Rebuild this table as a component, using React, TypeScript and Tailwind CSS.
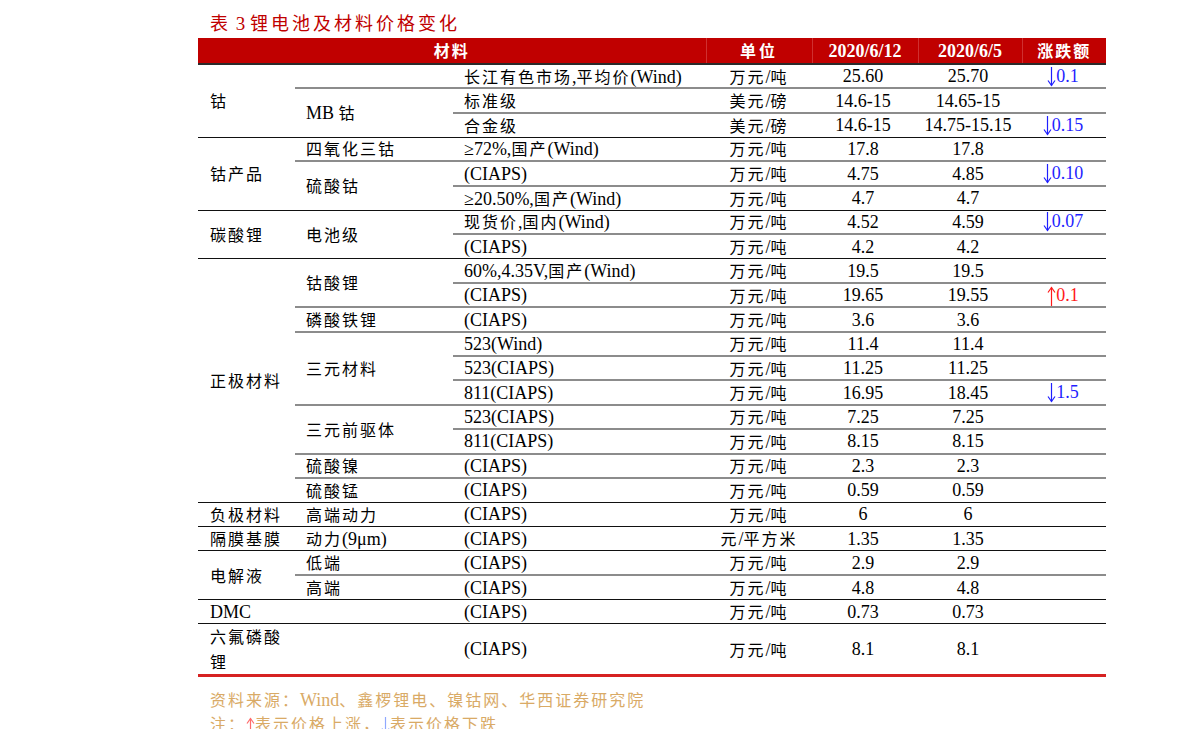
import React from "react";

type Cell = { t: string; span?: number; cols?: number };
type Row = {
  g?: boolean;
  c1?: Cell;
  c2?: Cell;
  c3: string;
  u: string;
  a: string;
  b: string;
  d?: string;
  tall?: boolean;
};

const rows: Row[] = [
  { g: true, c1: { t: "钴", span: 3 }, c2: { t: "" }, c3: "长江有色市场,平均价(Wind)", u: "万元/吨", a: "25.60", b: "25.70", d: "↓0.1" },
  { c2: { t: "MB 钴", span: 2 }, c3: "标准级", u: "美元/磅", a: "14.6-15", b: "14.65-15" },
  { c3: "合金级", u: "美元/磅", a: "14.6-15", b: "14.75-15.15", d: "↓0.15" },
  { g: true, c1: { t: "钴产品", span: 3 }, c2: { t: "四氧化三钴" }, c3: "≥72%,国产(Wind)", u: "万元/吨", a: "17.8", b: "17.8" },
  { c2: { t: "硫酸钴", span: 2 }, c3: "(CIAPS)", u: "万元/吨", a: "4.75", b: "4.85", d: "↓0.10" },
  { c3: "≥20.50%,国产(Wind)", u: "万元/吨", a: "4.7", b: "4.7" },
  { g: true, c1: { t: "碳酸锂", span: 2 }, c2: { t: "电池级", span: 2 }, c3: "现货价,国内(Wind)", u: "万元/吨", a: "4.52", b: "4.59", d: "↓0.07" },
  { c3: "(CIAPS)", u: "万元/吨", a: "4.2", b: "4.2" },
  { g: true, c1: { t: "正极材料", span: 10 }, c2: { t: "钴酸锂", span: 2 }, c3: "60%,4.35V,国产(Wind)", u: "万元/吨", a: "19.5", b: "19.5" },
  { c3: "(CIAPS)", u: "万元/吨", a: "19.65", b: "19.55", d: "↑0.1" },
  { c2: { t: "磷酸铁锂" }, c3: "(CIAPS)", u: "万元/吨", a: "3.6", b: "3.6" },
  { c2: { t: "三元材料", span: 3 }, c3: "523(Wind)", u: "万元/吨", a: "11.4", b: "11.4" },
  { c3: "523(CIAPS)", u: "万元/吨", a: "11.25", b: "11.25" },
  { c3: "811(CIAPS)", u: "万元/吨", a: "16.95", b: "18.45", d: "↓1.5" },
  { c2: { t: "三元前驱体", span: 2 }, c3: "523(CIAPS)", u: "万元/吨", a: "7.25", b: "7.25" },
  { c3: "811(CIAPS)", u: "万元/吨", a: "8.15", b: "8.15" },
  { c2: { t: "硫酸镍" }, c3: "(CIAPS)", u: "万元/吨", a: "2.3", b: "2.3" },
  { c2: { t: "硫酸锰" }, c3: "(CIAPS)", u: "万元/吨", a: "0.59", b: "0.59" },
  { g: true, c1: { t: "负极材料" }, c2: { t: "高端动力" }, c3: "(CIAPS)", u: "万元/吨", a: "6", b: "6" },
  { g: true, c1: { t: "隔膜基膜" }, c2: { t: "动力(9μm)" }, c3: "(CIAPS)", u: "元/平方米", a: "1.35", b: "1.35" },
  { g: true, c1: { t: "电解液", span: 2 }, c2: { t: "低端" }, c3: "(CIAPS)", u: "万元/吨", a: "2.9", b: "2.9" },
  { c2: { t: "高端" }, c3: "(CIAPS)", u: "万元/吨", a: "4.8", b: "4.8" },
  { g: true, c1: { t: "DMC" }, c2: { t: "" }, c3: "(CIAPS)", u: "万元/吨", a: "0.73", b: "0.73" },
  { g: true, c1: { t: "六氟磷酸锂" }, c2: { t: "" }, c3: "(CIAPS)", u: "万元/吨", a: "8.1", b: "8.1", tall: true },
];

const HAN = /[\u3000-\u303f\u3400-\u9fff\uff00-\uffef]/;

// split text so Chinese runs get the spaced look and latin stays Times-like
function Txt({ s, cjk = "text-[16px] tracking-[2px]" }: { s: string; cjk?: string }) {
  const parts = s.split(/([\u3000-\u303f\u3400-\u9fff\uff00-\uffef]+)/);
  return (
    <>
      {parts.map((p, i) =>
        HAN.test(p) ? (
          <span key={i} className={`font-['Noto_Sans_CJK_SC',sans-serif] ${cjk}`}>
            {p}
          </span>
        ) : (
          <span key={i}>{p}</span>
        )
      )}
    </>
  );
}

function Arrow({ up, color, h = 20 }: { up?: boolean; color: string; h?: number }) {
  return (
    <svg width="9" height={h} viewBox={`0 0 9 ${h}`} className="inline-block align-[-5px]" fill="none" stroke={color} strokeWidth="1.2">
      {up ? (
        <>
          <path d={`M4.5 1.5V${h}`} />
          <path d="M1 6.5L4.5 1.5L8 6.5" />
        </>
      ) : (
        <>
          <path d={`M4.5 0V${h - 1.5}`} />
          <path d={`M1 ${h - 6.5}L4.5 ${h - 1.5}L8 ${h - 6.5}`} />
        </>
      )}
    </svg>
  );
}

function Change({ d }: { d?: string }) {
  if (!d) return null;
  const up = d.startsWith("↑");
  const color = up ? "#ff1a1a" : "#1f1fff";
  return (
    <span className={up ? "text-[#ff1a1a]" : "text-[#1f1fff]"}>
      <Arrow up={up} color={color} />
      {d.slice(1)}
    </span>
  );
}

export default function App() {
  return (
    <div className="w-[1191px] h-[729px] overflow-hidden bg-white font-['Liberation_Serif',serif] text-black">
      <div className="ml-[198px] w-[908px]">
        <div className="h-[38px] pt-[9px] pl-[12px] leading-[26px] text-[19px] text-[#c00000]">
          <Txt s="表 3 锂电池及材料价格变化" cjk="text-[18px] tracking-[3px]" />
        </div>

        <table className="w-[908px] table-fixed border-collapse text-[18px]">
          <colgroup>
            <col className="w-[97px]" />
            <col className="w-[158px]" />
            <col className="w-[253px]" />
            <col className="w-[106px]" />
            <col className="w-[106px]" />
            <col className="w-[104px]" />
            <col className="w-[84px]" />
          </colgroup>
          <thead>
            <tr className="h-[26px] bg-[#c00000] text-white">
              <th colSpan={3} className="p-0 font-normal text-center leading-[20px]">
                <Txt s="材料" cjk="text-[16px] tracking-[2px] font-bold" />
              </th>
              <th className="p-0 font-normal text-center leading-[20px] border-l border-[#cf3030]">
                <Txt s="单位" cjk="text-[16px] tracking-[3px] font-bold" />
              </th>
              <th className="p-0 font-bold text-center leading-[20px] border-l border-[#cf3030]">2020/6/12</th>
              <th className="p-0 font-bold text-center leading-[20px] border-l border-[#cf3030]">2020/6/5</th>
              <th className="p-0 font-normal text-center leading-[20px] border-l border-[#cf3030]">
                <Txt s="涨跌额" cjk="text-[16px] tracking-[2px] font-bold" />
              </th>
            </tr>
          </thead>
          <tbody>
            {rows.map((r, i) => {
              const line =
                i === 0
                  ? "border-t-2 border-[#2a2a2a]"
                  : r.g
                  ? "border-t border-[#111]"
                  : "border-t-2 border-[#8c8c8c]";
              const td = `p-0 align-middle leading-[20px] ${line}`;
              return (
                <tr key={i} className={r.tall ? "h-[47.5px]" : "h-[24.35px]"}>
                  {r.c1 && (
                    <td rowSpan={r.c1.span} className={`${td} pl-[12px] pr-[4px] ${r.tall ? "leading-[24px]" : ""}`}>
                      <Txt s={r.c1.t} />
                    </td>
                  )}
                  {r.c2 && (
                    <td rowSpan={r.c2.span} className={`${td} pl-[11px]`}>
                      <Txt s={r.c2.t} />
                    </td>
                  )}
                  <td className={`${td} pl-[11px] whitespace-nowrap`}>
                    <Txt s={r.c3} />
                  </td>
                  <td className={`${td} text-center whitespace-nowrap`}>
                    <Txt s={r.u} />
                  </td>
                  <td className={`${td} text-center pr-[4px]`}>{r.a}</td>
                  <td className={`${td} text-center pr-[4px]`}>{r.b}</td>
                  <td className={`${td} text-center pr-[2px]`}>
                    <Change d={r.d} />
                  </td>
                </tr>
              );
            })}
          </tbody>
          <tfoot>
            <tr>
              <td colSpan={7} className="p-0 h-0 border-t-[3px] border-[#d62222]" />
            </tr>
          </tfoot>
        </table>

        <div className="pt-[11px] pl-[12px] text-[18px] leading-[23px] text-[#d9aa66]">
          <div>
            <Txt s="资料来源：Wind、鑫椤锂电、镍钴网、华西证券研究院" />
          </div>
          <div>
            <Txt s="注：" />
            <Arrow up color="#ff6b6b" h={18} />
            <Txt s="表示价格上涨，" />
            <Arrow color="#8fa8ff" h={18} />
            <Txt s="表示价格下跌" />
          </div>
        </div>
      </div>
    </div>
  );
}
